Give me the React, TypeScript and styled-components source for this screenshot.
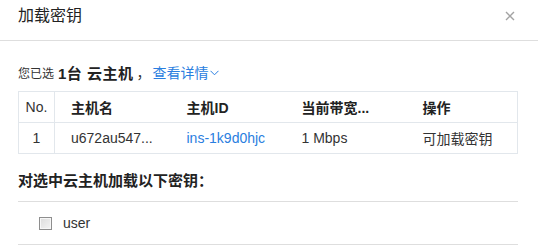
import React from 'react';
import styled, { createGlobalStyle } from 'styled-components';

const GlobalStyle = createGlobalStyle`
  html, body {
    margin: 0;
    padding: 0;
    background: #fff;
  }
  body {
    font-family: "Liberation Sans", "Noto Sans CJK SC", sans-serif;
    color: #333;
  }
`;

interface iInstance {
  no: number;
  name: string;
  id: string;
  bandwidth: string;
  action: string;
}

const instances: iInstance[] = [
  { no: 1, name: 'u672au547...', id: 'ins-1k9d0hjc', bandwidth: '1 Mbps', action: '可加载密钥' },
];

const keys = ['user'];

const App = () => {
  return (
    <>
      <GlobalStyle />
      <Dialog>
        <Header>
          <Title>加载密钥</Title>
          <CloseButton aria-label="关闭">
            <svg width="10" height="10" viewBox="0 0 10 10">
              <path d="M1 1 L9 9 M9 1 L1 9" stroke="#a3a3a3" strokeWidth="1.4" fill="none" />
            </svg>
          </CloseButton>
        </Header>
        <Body>
          <Summary>
            <SummaryLabel>您已选</SummaryLabel>
            <Strong>1台 云主机</Strong>
            <Comma>，</Comma>
            <DetailLink>
              查看详情
              <svg width="9" height="6" viewBox="0 0 9 6">
                <path d="M0.5 0.8 L4.5 4.8 L8.5 0.8" stroke="#2a7ee0" strokeWidth="1" fill="none" />
              </svg>
            </DetailLink>
          </Summary>
          <Table>
            <colgroup>
              <col style={{ width: 36 }} />
              <col style={{ width: 116 }} />
              <col style={{ width: 115 }} />
              <col style={{ width: 121 }} />
              <col />
            </colgroup>
            <thead>
              <tr>
                <NoCell as="th">No.</NoCell>
                <HeadCell>主机名</HeadCell>
                <HeadCell>主机ID</HeadCell>
                <HeadCell>当前带宽...</HeadCell>
                <HeadCell>操作</HeadCell>
              </tr>
            </thead>
            <tbody>
              {instances.map(item => (
                <tr key={item.id}>
                  <NoCell>{item.no}</NoCell>
                  <Cell>{item.name}</Cell>
                  <Cell $link>{item.id}</Cell>
                  <Cell>{item.bandwidth}</Cell>
                  <Cell>{item.action}</Cell>
                </tr>
              ))}
            </tbody>
          </Table>
          <SectionTitle>对选中云主机加载以下密钥：</SectionTitle>
          <KeyList>
            {keys.map(key => (
              <KeyRow key={key}>
                <Checkbox type="checkbox" />
                <KeyName>{key}</KeyName>
              </KeyRow>
            ))}
          </KeyList>
        </Body>
      </Dialog>
    </>
  );
};

export default App;

const Dialog = styled.div`
  width: 538px;
  height: 248px;
  background: #fff;
  overflow: hidden;
`;

const Header = styled.div`
  display: flex;
  justify-content: space-between;
  align-items: center;
  height: 32px;
  padding: 0 22px 8px 18px;
  border-bottom: 1px solid #dedede;
`;

const Title = styled.h3`
  margin: 0;
  font-size: 16px;
  font-weight: 400;
  color: #222;
  line-height: 32px;
`;

const CloseButton = styled.button`
  display: flex;
  align-items: center;
  justify-content: center;
  width: 12px;
  height: 12px;
  padding: 0;
  border: 0;
  background: none;
  cursor: pointer;
`;

const Body = styled.div`
  padding: 0 20px 0 18px;
`;

const Summary = styled.div`
  display: flex;
  align-items: center;
  height: 22px;
  margin-top: 20px;
  margin-bottom: 8px;
  font-size: 14px;
  color: #333;
`;

const SummaryLabel = styled.span`
  font-size: 12px;
  margin-right: 4px;
`;

const Strong = styled.span`
  font-size: 15px;
  font-weight: 700;
  letter-spacing: 0.5px;
  color: #222;
`;

const Comma = styled.span`
  margin: 0 2px 0 3px;
`;

const DetailLink = styled.a`
  display: flex;
  align-items: center;
  gap: 1px;
  color: #2a7ee0;
  cursor: pointer;
  svg {
    margin-top: 2px;
  }
`;

const Table = styled.table`
  width: 500px;
  table-layout: fixed;
  border-collapse: collapse;
  border: 1px solid #e2e7ec;
  font-size: 14px;
  tbody tr td {
    border-top: 1px solid #e2e7ec;
  }
`;

const HeadCell = styled.th`
  height: 30px;
  padding: 0 0 0 16px;
  text-align: left;
  font-weight: 700;
  color: #222;
  white-space: nowrap;
  overflow: hidden;
`;

const Cell = styled.td<{ $link?: boolean }>`
  height: 30px;
  padding: 0 0 0 16px;
  color: ${props => (props.$link ? '#2a7ee0' : '#333')};
  white-space: nowrap;
  overflow: hidden;
`;

const NoCell = styled.td`
  height: 30px;
  padding: 0;
  text-align: center;
  font-weight: 400;
  color: #333;
  border-right: 1px solid #e2e7ec;
`;

const SectionTitle = styled.h4`
  margin: 16px 0 0;
  padding-bottom: 9px;
  line-height: 22px;
  font-size: 15px;
  font-weight: 700;
  color: #222;
  border-bottom: 1px solid #dedede;
`;

const KeyList = styled.ul`
  margin: 0;
  padding: 0;
  list-style: none;
`;

const KeyRow = styled.li`
  display: flex;
  align-items: center;
  height: 42px;
  padding-left: 21px;
  border-bottom: 1px solid #dedede;
`;

const Checkbox = styled.input`
  appearance: none;
  width: 13px;
  height: 13px;
  margin: 0 11px 0 0;
  border: 1px solid #8e8e8e;
  background: linear-gradient(135deg, #dcdcdc, #f4f4f4);
  box-shadow: inset 0 0 0 1px #f7f7f7;
  box-sizing: border-box;
`;

const KeyName = styled.span`
  font-size: 14px;
  color: #333;
`;
